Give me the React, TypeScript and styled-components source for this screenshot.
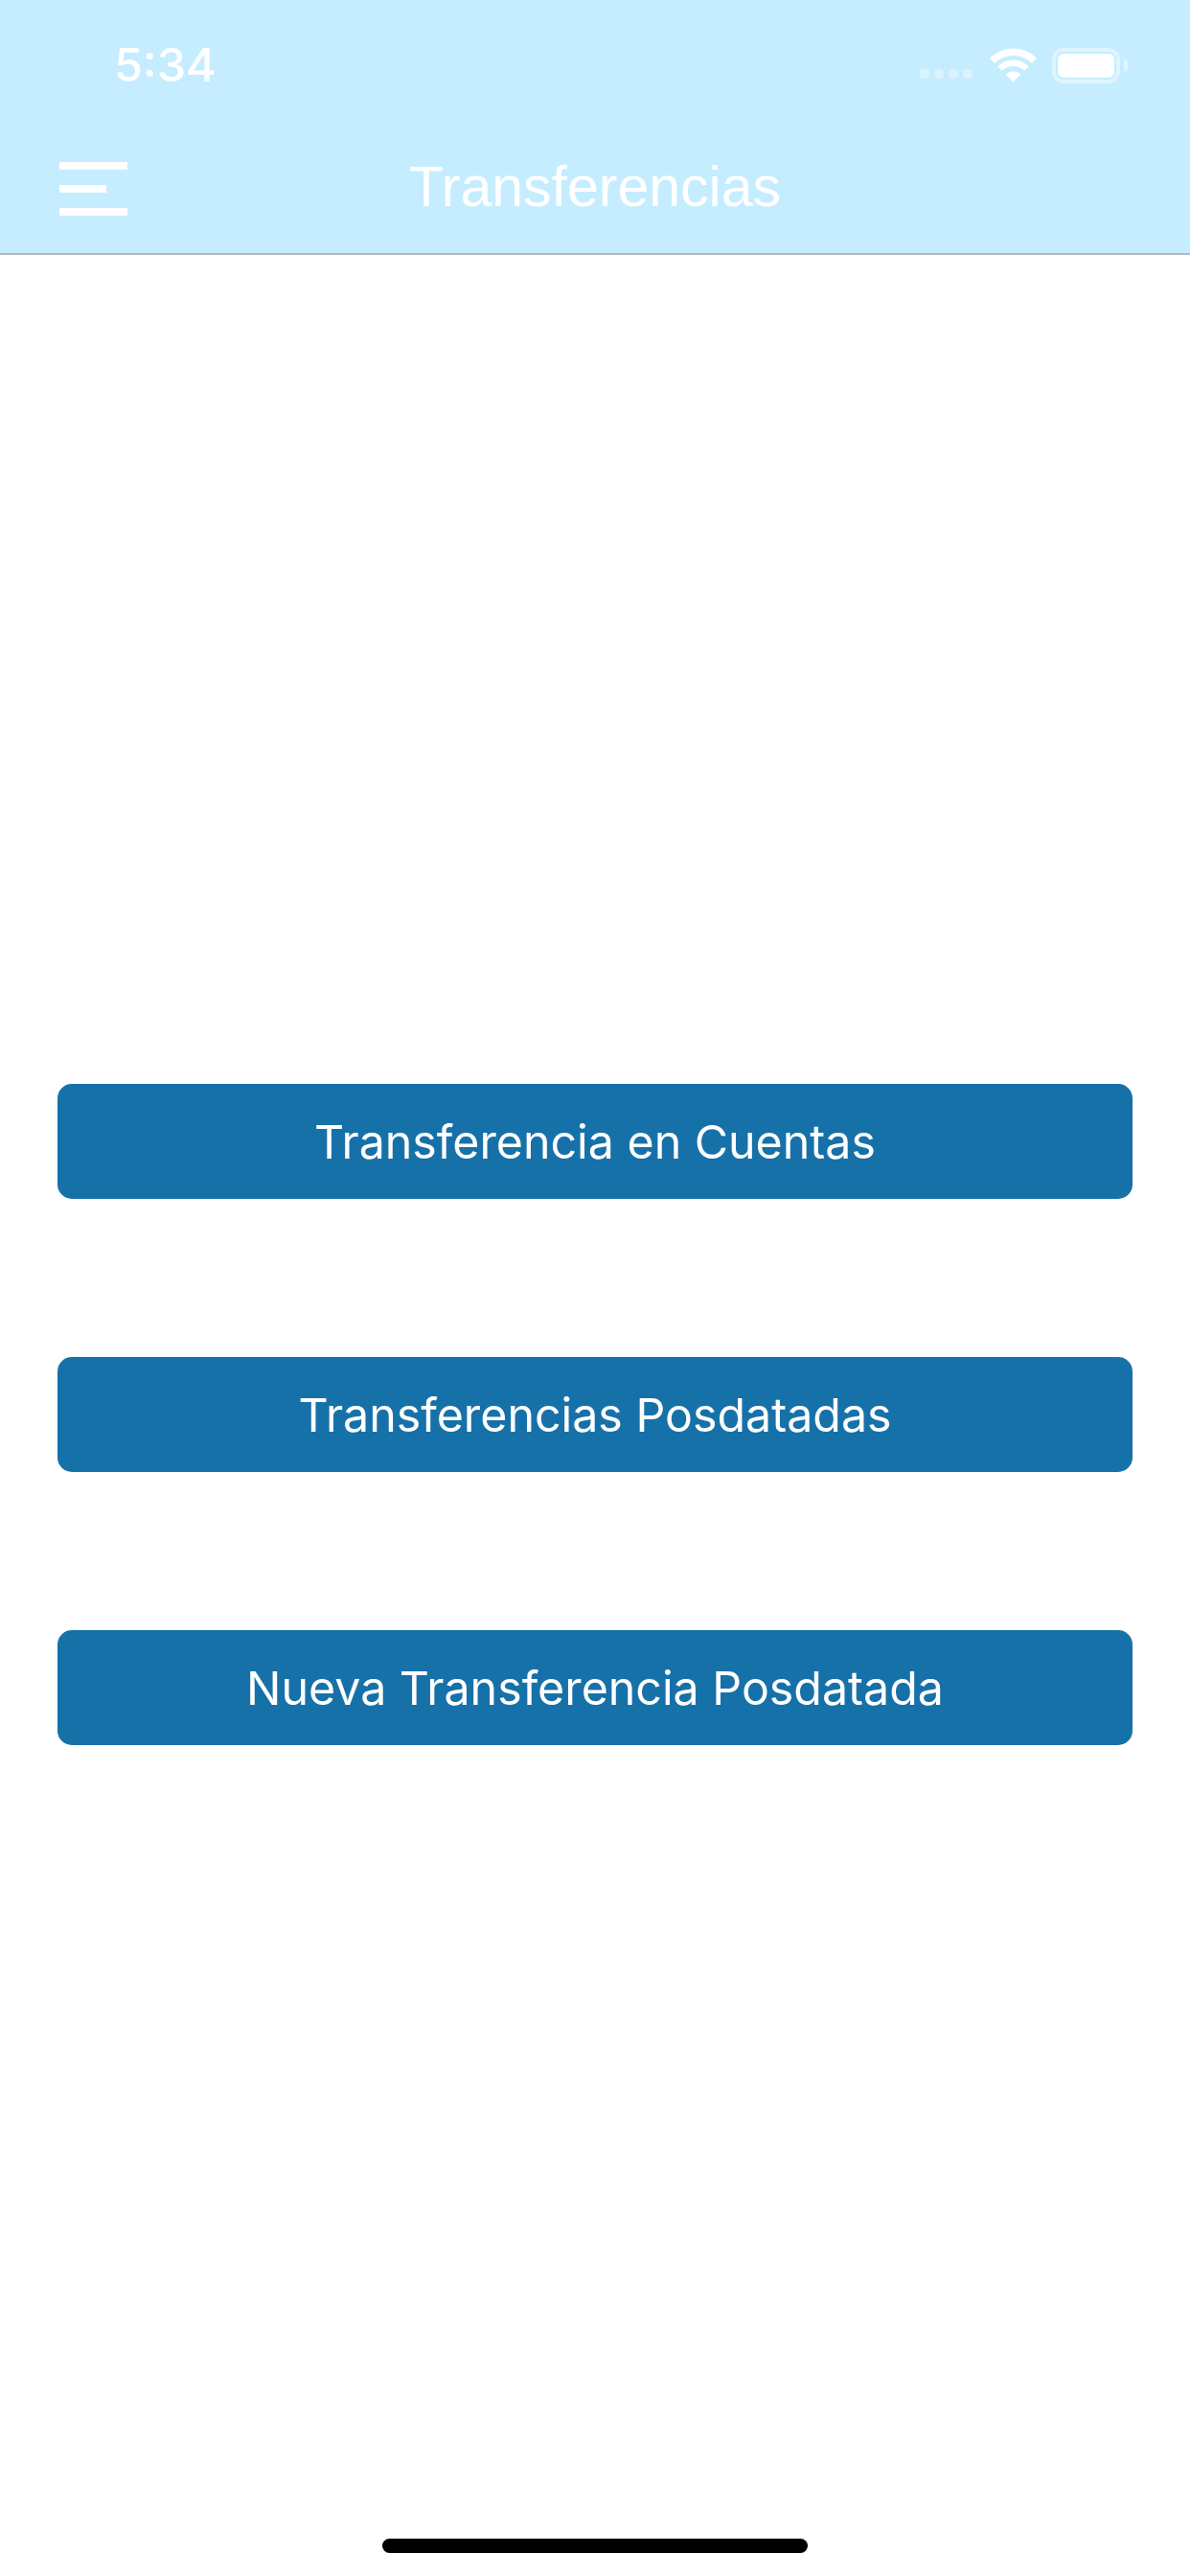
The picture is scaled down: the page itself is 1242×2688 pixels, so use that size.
import styled, { createGlobalStyle } from 'styled-components';

const GlobalStyle = createGlobalStyle`
  html, body {
    margin: 0;
    padding: 0;
    background: #ffffff;
  }
  * {
    box-sizing: border-box;
  }
`;

const Page = styled.div`
  width: 1242px;
  height: 2688px;
  display: flex;
  flex-direction: column;
  background: #ffffff;
  font-family: Inter, 'Liberation Sans', sans-serif;
  overflow: hidden;
`;

const Header = styled.header`
  height: 266px;
  flex-shrink: 0;
  padding-bottom: 8px;
  background: #c5edff;
  border-bottom: 2px solid #b2b8bb;
  color: #ffffff;
`;

const StatusBar = styled.div`
  height: 136px;
  display: flex;
  align-items: center;
  padding: 0 65px 0 119px;
`;

const Time = styled.span`
  flex: 1;
  font-size: 48.5px;
  font-weight: 500;
  line-height: 1;
`;

const StatusIcons = styled.div`
  display: flex;
  align-items: center;
`;

const SignalDots = styled.div`
  display: flex;
  gap: 5px;
  margin: 17px 18px 0 0;
`;

const SignalDot = styled.span`
  width: 10px;
  height: 10px;
  border-radius: 4px;
  background: rgba(255, 255, 255, 0.35);
`;

const WifiIcon = styled.svg`
  width: 49px;
  height: 36px;
  margin-right: 16px;
  fill: #ffffff;
`;

const Battery = styled.div`
  width: 71px;
  height: 37px;
  padding: 2px;
  border: 4px solid rgba(255, 255, 255, 0.45);
  border-radius: 12px;
  background-clip: padding-box;
`;

const BatteryFill = styled.div`
  height: 100%;
  border-radius: 6px;
  background: #ffffff;
`;

const BatteryNub = styled.span`
  width: 4px;
  height: 13px;
  margin-left: 4px;
  border-radius: 0 4px 4px 0;
  background: rgba(255, 255, 255, 0.5);
`;

const NavBar = styled.nav`
  height: 122px;
  display: grid;
  grid-template-columns: 1fr auto 1fr;
  align-items: center;
  padding: 0 62px;
`;

const MenuButton = styled.div`
  width: 71px;
  display: flex;
  flex-direction: column;
  gap: 16px;
`;

const MenuBar = styled.span<{ $short?: boolean }>`
  display: block;
  width: ${({ $short }) => ($short ? '49px' : '71px')};
  height: 8px;
  background: #ffffff;
`;

const Title = styled.h1`
  margin: 0 0 3px;
  font-family: 'Liberation Sans', Arial, sans-serif;
  font-size: 59px;
  font-weight: 400;
  line-height: 1;
  color: #ffffff;
`;

const Main = styled.main`
  flex: 1;
  display: flex;
  flex-direction: column;
  gap: 165px;
  padding: 865px 60px 0;
`;

const ActionButton = styled.button`
  height: 120px;
  width: 100%;
  padding: 0;
  border: none;
  border-radius: 15px;
  background: #1771a9;
  color: #ffffff;
  font-family: Inter, 'Liberation Sans', sans-serif;
  font-size: 48.3px;
  font-weight: 400;
`;

const HomeArea = styled.div`
  height: 39px;
  flex-shrink: 0;
  display: flex;
  justify-content: center;
`;

const HomeIndicator = styled.span`
  width: 444px;
  height: 15px;
  border-radius: 8px;
  background: #000000;
`;

const actions = ['Transferencia en Cuentas', 'Transferencias Posdatadas', 'Nueva Transferencia Posdatada'];

export default function App() {
  return (
    <Page>
      <GlobalStyle />
      <Header>
        <StatusBar>
          <Time>5:34</Time>
          <StatusIcons>
            <SignalDots>
              {[0, 1, 2, 3].map(dot => (
                <SignalDot key={dot} />
              ))}
            </SignalDots>
            <WifiIcon viewBox="0 0 49 36">
              <path d="M-0.25 10.75 A35 35 0 0 1 49.25 10.75 L43.95 16.05 A27.5 27.5 0 0 0 5.05 16.05 Z" />
              <path d="M8.24 19.24 A23 23 0 0 1 40.76 19.24 L36.17 23.83 A16.5 16.5 0 0 0 12.83 23.83 Z" />
              <path d="M16.72 27.72 A11 11 0 0 1 32.28 27.72 L24.5 35.5 Z" />
            </WifiIcon>
            <Battery>
              <BatteryFill />
            </Battery>
            <BatteryNub />
          </StatusIcons>
        </StatusBar>
        <NavBar>
          <MenuButton>
            <MenuBar />
            <MenuBar $short />
            <MenuBar />
          </MenuButton>
          <Title>Transferencias</Title>
        </NavBar>
      </Header>
      <Main>
        {actions.map(label => (
          <ActionButton key={label}>{label}</ActionButton>
        ))}
      </Main>
      <HomeArea>
        <HomeIndicator />
      </HomeArea>
    </Page>
  );
}
